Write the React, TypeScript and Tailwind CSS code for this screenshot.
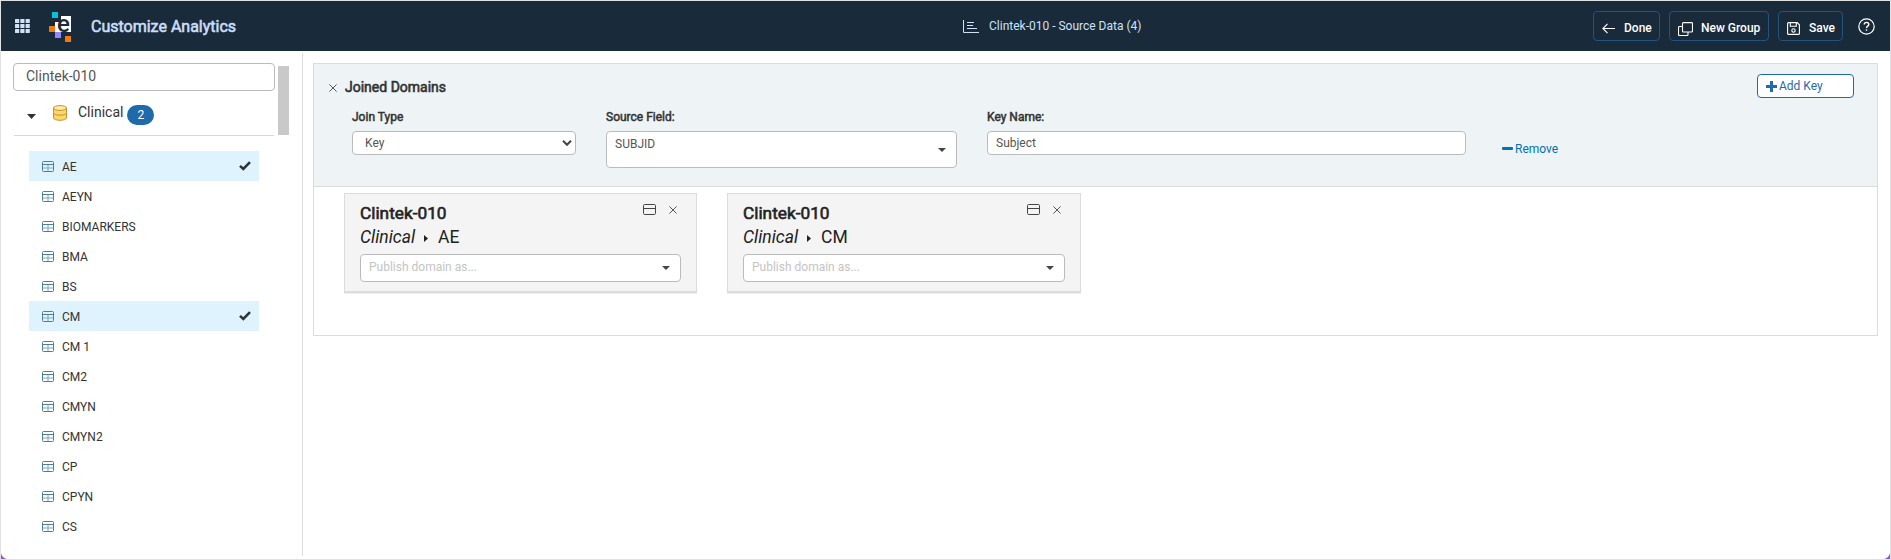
import React from "react";

const domains = ["AE", "AEYN", "BIOMARKERS", "BMA", "BS", "CM", "CM 1", "CM2", "CMYN", "CMYN2", "CP", "CPYN", "CS"];
const selectedDomains = ["AE", "CM"];

const headings = "font-normal [-webkit-text-stroke:0.6px_currentColor]";

function GridIcon() {
  return (
    <svg width="15" height="14" viewBox="0 0 15 14" fill="#cfe2f7">
      {[0, 5, 10].map((y) =>
        [0, 5.3, 10.6].map((x) => <rect key={`${x}-${y}`} x={x} y={y} width="4.2" height="4" rx="0.5" />),
      )}
    </svg>
  );
}

function Logo() {
  return (
    <svg className="overflow-visible" width="22" height="30" viewBox="0 0 22 30">
      <path fill="#fff" d="M12 4h10v16H6V10h6z" />
      <rect x="3" width="6" height="6" fill="#06c0dc" />
      <rect y="14" width="6" height="6" fill="#f07810" />
      <rect x="6" y="20" width="6" height="6" fill="#9188ff" />
      <rect x="16" y="24" width="6" height="6" fill="#f07810" />
      <text x="8" y="19.500" fontSize="24" fontWeight="500" fill="#192b3b">e</text>
    </svg>
  );
}

function TableIcon() {
  return (
    <svg className="mt-[1px]" width="12" height="11" viewBox="0 0 12 11" fill="none">
      <path d="M1 7h10" stroke="#a9bfca" strokeWidth="1.400" />
      <path d="M6 4v6" stroke="#6aa9c9" />
      <rect x="0.5" y="0.5" width="11" height="10" rx="1" stroke="#4b7f9c" />
      <path d="M1 3.500h10" stroke="#4b7f9c" />
    </svg>
  );
}

function DatabaseIcon() {
  return (
    <svg width="14" height="16" viewBox="0 0 14 16" stroke="#c98f2c">
      <path d="M.5 8.500v4.300c0 3.300 13 3.300 13 0V8.500z" fill="#fbd76b" />
      <path d="M.5 3v4.800c0 3.200 13 3.200 13 0V3z" fill="#fbd76b" />
      <ellipse cx="7" cy="3" rx="6.500" ry="2.400" fill="#ffeea6" />
    </svg>
  );
}

function CheckIcon() {
  return (
    <svg width="12" height="10" viewBox="0 0 12 10" fill="none" stroke="#2f3437" strokeWidth="2.600">
      <path d="M1 4.900 4.300 8 11 1.200" />
    </svg>
  );
}

function CloseIcon() {
  return (
    <svg width="8" height="8" viewBox="0 0 8 8" stroke="#444" strokeWidth="0.9">
      <path d="M.4.4l7.200 7.200M7.600.4.4 7.600" />
    </svg>
  );
}

function LayoutIcon() {
  return (
    <svg width="13" height="11" viewBox="0 0 13 11" fill="none" stroke="#444">
      <rect x="0.5" y="0.5" width="12" height="10" rx="1.200" />
      <path d="M1 4.500h11" />
    </svg>
  );
}

function Caret() {
  return (
    <svg width="8" height="4" viewBox="0 0 8 4" fill="#444">
      <path d="M0 0h8L4 4z" />
    </svg>
  );
}

function HeaderButton({ width, icon, label }: { width: string; icon: React.ReactNode; label: string }) {
  return (
    <button className={`flex h-[30px] items-center whitespace-nowrap rounded-[4px] border border-[#24527f] pl-2 pt-[3px] text-[12px] font-medium text-white ${width}`}>
      {icon}
      {label}
    </button>
  );
}

function Header() {
  return (
    <header className="flex h-[50px] shrink-0 items-start bg-[#192b3b] text-[#cfe2f7]">
      <div className="flex w-[960px] items-start pl-[14px] pt-[11px]">
        <div className="mt-[7px]"><GridIcon /></div>
        <div className="ml-[19px]"><Logo /></div>
        <h1 className={`ml-5 mt-[3px] text-[16px] leading-6 text-[#c9def5] ${headings}`}>Customize Analytics</h1>
      </div>
      <div className="flex flex-1 pl-[1px] pt-[16px]">
        <svg className="mt-[2px]" width="17" height="15" viewBox="0 0 17 15" fill="none" stroke="#cfe2f7">
          <path d="M1.500 1v12.500H17M5 3.500h7M5 6.500h6M5 9.500h10" />
        </svg>
        <span className="ml-[10px] text-[12px] leading-[18px]">Clintek-010 - Source Data (4)</span>
      </div>
      <div className="flex gap-[9px] pr-[15px] pt-[10px]">
        <HeaderButton
          width="w-[67px]"
          label="Done"
          icon={
            <svg className="mr-[9px] mt-[2px]" width="13" height="11" viewBox="0 0 13 11" fill="none" stroke="#fff" strokeWidth="1.100">
              <path d="M13 5.500H1M5.500.8.9 5.500l4.600 4.700" />
            </svg>
          }
        />
        <HeaderButton
          width="w-[100px]"
          label="New Group"
          icon={
            <svg className="mr-2 mt-[2px]" width="15" height="14" viewBox="0 0 15 14" fill="none" stroke="#fff" strokeWidth="1.100">
              <rect x="4.500" y="0.600" width="10" height="9.400" rx="1" />
              <path d="M4.500 4.500h-3q-1 0-1 1v7q0 1 1 1H9q1 0 1-1V10" />
            </svg>
          }
        />
        <HeaderButton
          width="w-[65px]"
          label="Save"
          icon={
            <svg className="mr-[9px] mt-[1px]" width="13" height="13" viewBox="0 0 13 13" fill="none" stroke="#fff" strokeWidth="1.100">
              <path d="M1.600.6h8.600l2.200 2.200v8.600q0 1-1 1H1.600q-1 0-1-1V1.600q0-1 1-1zM3.300.6v3.600h6V.6" />
              <circle cx="6.500" cy="8.500" r="1.700" />
            </svg>
          }
        />
        <svg className="ml-[6px] mt-[7px]" width="17" height="17" viewBox="0 0 17 17" fill="none" stroke="#fff" strokeWidth="1.200">
          <circle cx="8.500" cy="8.500" r="7.700" />
          <path d="M6.200 6.600c0-3 4.600-2.900 4.600-.2 0 1.700-2.300 1.700-2.300 3.500M8.500 11.300v1.400" strokeWidth="1.400" />
        </svg>
      </div>
    </header>
  );
}

function Sidebar() {
  return (
    <aside className="mb-[3px] mt-[2px] w-[302px] shrink-0 border-r border-[#dcdcdc] pl-3 pt-[10px]">
      <div className="flex h-[72px] items-start">
        <div className="w-[262px]">
          <div className="h-7 rounded-[4px] border border-[#bbb] pl-3 text-[14px] leading-[25px] text-[#555]">Clintek-010</div>
          <div className="ml-[1px] flex h-[45px] w-[260px] items-start border-b border-[#d8d8d8] pl-[13px] pt-[14px]">
            <svg className="mt-[9px]" width="9" height="5" viewBox="0 0 9 5" fill="#2f3437"><path d="M0 0h9L4.500 5z" /></svg>
            <div className="ml-[17px]"><DatabaseIcon /></div>
            <span className="-mt-[2px] ml-[11px] text-[14px] leading-[18px] text-[#333]">Clinical</span>
            <span className="ml-1 flex h-5 w-[27px] items-center justify-center rounded-full bg-[#1f6aab] text-[12px] text-white">2</span>
          </div>
        </div>
        <div className="ml-[3px] mt-[3px] h-[69px] w-[11px] bg-[#c9c9c9]" />
      </div>
      <ul className="ml-4 mt-4 w-[230px]">
        {domains.map((name) => {
          const selected = selectedDomains.includes(name);
          return (
            <li
              key={name}
              className={`flex h-[30px] items-center pl-[13px] pr-2 text-[12px] text-[#333] ${selected ? "bg-[#dff3fe]" : ""}`}
            >
              <TableIcon />
              <span className="ml-2 flex-1 pt-[2px]">{name}</span>
              {selected && <CheckIcon />}
            </li>
          );
        })}
      </ul>
    </aside>
  );
}

function FieldLabel({ children }: { children: React.ReactNode }) {
  return <div className="mb-[5px] h-[18px] text-[12px] leading-[18px] text-[#333] [-webkit-text-stroke:0.5px_currentColor]">{children}</div>;
}

function DomainCard({ name, width }: { name: string; width: string }) {
  return (
    <div className={`h-[100px] border border-b-2 border-[#dcdcdc] bg-[#f4f4f4] px-[15px] pt-[7px] shadow-[0_1px_0_#eee] ${width}`}>
      <div className="flex h-6 items-start">
        <h3 className={`flex-1 text-[17.25px] leading-6 text-[#222] ${headings}`}>Clintek-010</h3>
        <div className="mr-[4px] mt-[3px] flex items-center gap-[13px]">
          <LayoutIcon />
          <CloseIcon />
        </div>
      </div>
      <div className="flex h-6 items-center text-[17.5px] text-[#222]">
        <i>Clinical</i>
        <svg className="ml-[9px] mr-[10px] mt-[3px]" width="4" height="7" viewBox="0 0 4 7" fill="#222"><path d="M0 0v7l4-3.500z" /></svg>
        <span>{name}</span>
      </div>
      <div className="mt-[5px] flex h-7 items-center justify-between rounded-[4px] border border-[#bbb] bg-white pl-2 pr-[10px] text-[12px] text-[#c4c4c4]">
        <span className="-mt-[3px]">Publish domain as...</span>
        <Caret />
      </div>
    </div>
  );
}

function JoinedDomains() {
  return (
    <section className="h-[273px] w-[1565px] border border-[#dcdcdc] bg-white">
      <div className="h-[123px] border-b border-[#dcdcdc] bg-[#eef3f6]">
        <div className="flex h-11 items-start pl-[15px] pr-[23px]">
          <div className="mt-5"><CloseIcon /></div>
          <h2 className={`ml-[8px] mt-[13px] flex-1 text-[14px] leading-5 text-[#333] ${headings}`}>Joined Domains</h2>
          <button className="mt-[10px] flex h-6 w-[97px] items-center rounded-[4px] border border-[#1f6aab] bg-white pl-2 text-[12px] text-[#1f6aab]">
            <svg className="mr-[2px]" width="11" height="11" viewBox="0 0 11 11" stroke="#1f6aab" strokeWidth="3"><path d="M5.500 0v11M0 5.500h11" /></svg>
            <span>Add Key</span>
          </button>
        </div>
        <div className="flex items-start pl-[38px] text-[12px] text-[#555]">
          <div className="w-[224px]">
            <FieldLabel>Join Type</FieldLabel>
            <div className="flex h-6 items-center justify-between rounded-[4px] border border-[#bbb] bg-white pl-3 pr-[3px]">
              <span className="-mt-[1px]">Key</span>
              <svg width="10" height="6" viewBox="0 0 10 6" fill="none" stroke="#444" strokeWidth="2"><path d="M1 .8l4 4 4-4" /></svg>
            </div>
          </div>
          <div className="ml-[30px] w-[351px]">
            <FieldLabel>Source Field:</FieldLabel>
            <div className="flex h-[37px] items-start justify-between rounded-[4px] border border-[#bbb] bg-white pl-2 pr-[10px]">
              <span className="leading-6">SUBJID</span>
              <div className="mt-4"><Caret /></div>
            </div>
          </div>
          <div className="ml-[30px] w-[479px]">
            <FieldLabel>Key Name:</FieldLabel>
            <div className="h-6 rounded-[4px] border border-[#bbb] bg-white pl-2 leading-[22px]">Subject</div>
          </div>
          <a className="ml-[36px] mt-8 flex items-center text-[12px] leading-[18px] text-[#0072b5]">
            <span className="-mt-[1px] mr-[2px] h-[3px] w-[11px] rounded-[1px] bg-[#0072b5]" />
            Remove
          </a>
        </div>
      </div>
      <div className="flex gap-[30px] pl-[30px] pt-[6px]">
        <DomainCard name="AE" width="w-[353px]" />
        <DomainCard name="CM" width="w-[354px]" />
      </div>
    </section>
  );
}

export default function App() {
  return (
    <div className="relative flex h-[560px] w-[1891px] flex-col overflow-hidden border border-[#dfe1e2] bg-white font-['Roboto',sans-serif]">
      <Header />
      <div className="flex flex-1">
        <Sidebar />
        <main className="pl-[10px] pt-3">
          <JoinedDomains />
        </main>
      </div>
      <svg className="absolute bottom-0 left-0" width="6" height="6" fill="#8a5cc4"><path d="M0 0q1 5 6 6H0z" /></svg>
      <svg className="absolute bottom-0 right-0" width="6" height="6" fill="#8a5cc4"><path d="M6 0Q5 5 0 6h6z" /></svg>
    </div>
  );
}
